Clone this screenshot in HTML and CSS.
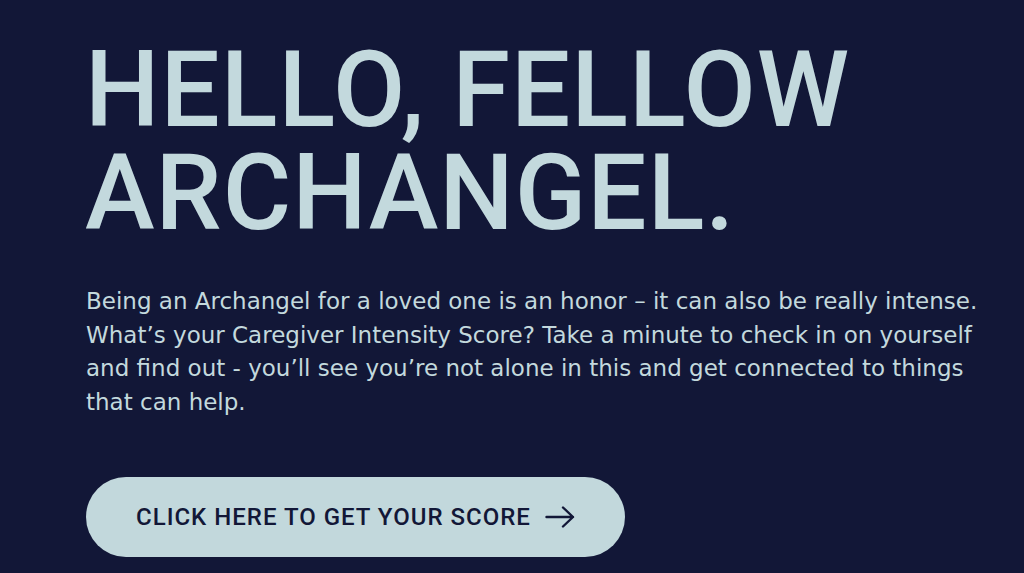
FILE: index.html
```html
<!DOCTYPE html>
<html lang="en">
<head>
<meta charset="utf-8">
<title>Hello, Fellow Archangel</title>
<link rel="stylesheet" href="styles.css">
</head>
<body>
<main class="hero">
  <h1 class="hero-title">HELLO, FELLOW<br>ARCHANGEL.</h1>
  <p class="hero-text">Being an Archangel for a loved one is an honor – it can also be really intense. What’s your Caregiver Intensity Score? Take a minute to check in on yourself and find out - you’ll see you’re not alone in this and get connected to things that can help.</p>
  <a class="hero-button" href="#">
    <span class="hero-button-label">CLICK HERE TO GET YOUR SCORE</span>
    <svg class="arrow" width="30" height="22" viewBox="0 0 30 22" aria-hidden="true">
      <path d="M1.5 11 H28 M18 1.5 L28 11 L18 20.5" fill="none" stroke="currentColor" stroke-width="2.4" stroke-linecap="round" stroke-linejoin="round"/>
    </svg>
  </a>
</main>
</body>
</html>
```
FILE: styles.css
```css
html, body {
  margin: 0;
  padding: 0;
  background: #121737;
  height: 100%;
  overflow: hidden;
}
.hero {
  padding: 39px 40px 0 86px;
  color: #c3d9dd;
}
.hero-title {
  margin: 0 0 0 -1px;
  font-family: Roboto, "Liberation Sans", sans-serif;
  font-size: 105px;
  line-height: 103px;
  font-weight: 500;
  letter-spacing: 1px;
}
.hero-text {
  margin: 40px 0 0 0;
  font-family: "DejaVu Sans", "Liberation Sans", sans-serif;
  font-size: 23px;
  line-height: 33.5px;
  max-width: 910px;
}
.hero-button {
  margin-top: 58px;
  display: flex;
  width: fit-content;
  box-sizing: border-box;
  align-items: center;
  gap: 14px;
  height: 80px;
  padding: 0 50px 0 50px;
  border-radius: 40px;
  background: #c2d8dc;
  color: #121737;
  text-decoration: none;
  font-family: Roboto, "Liberation Sans", sans-serif;
  font-size: 24px;
  font-weight: 500;
  letter-spacing: 1px;
}
.hero-button-label { display: block; }
.arrow { display: block; }
```
